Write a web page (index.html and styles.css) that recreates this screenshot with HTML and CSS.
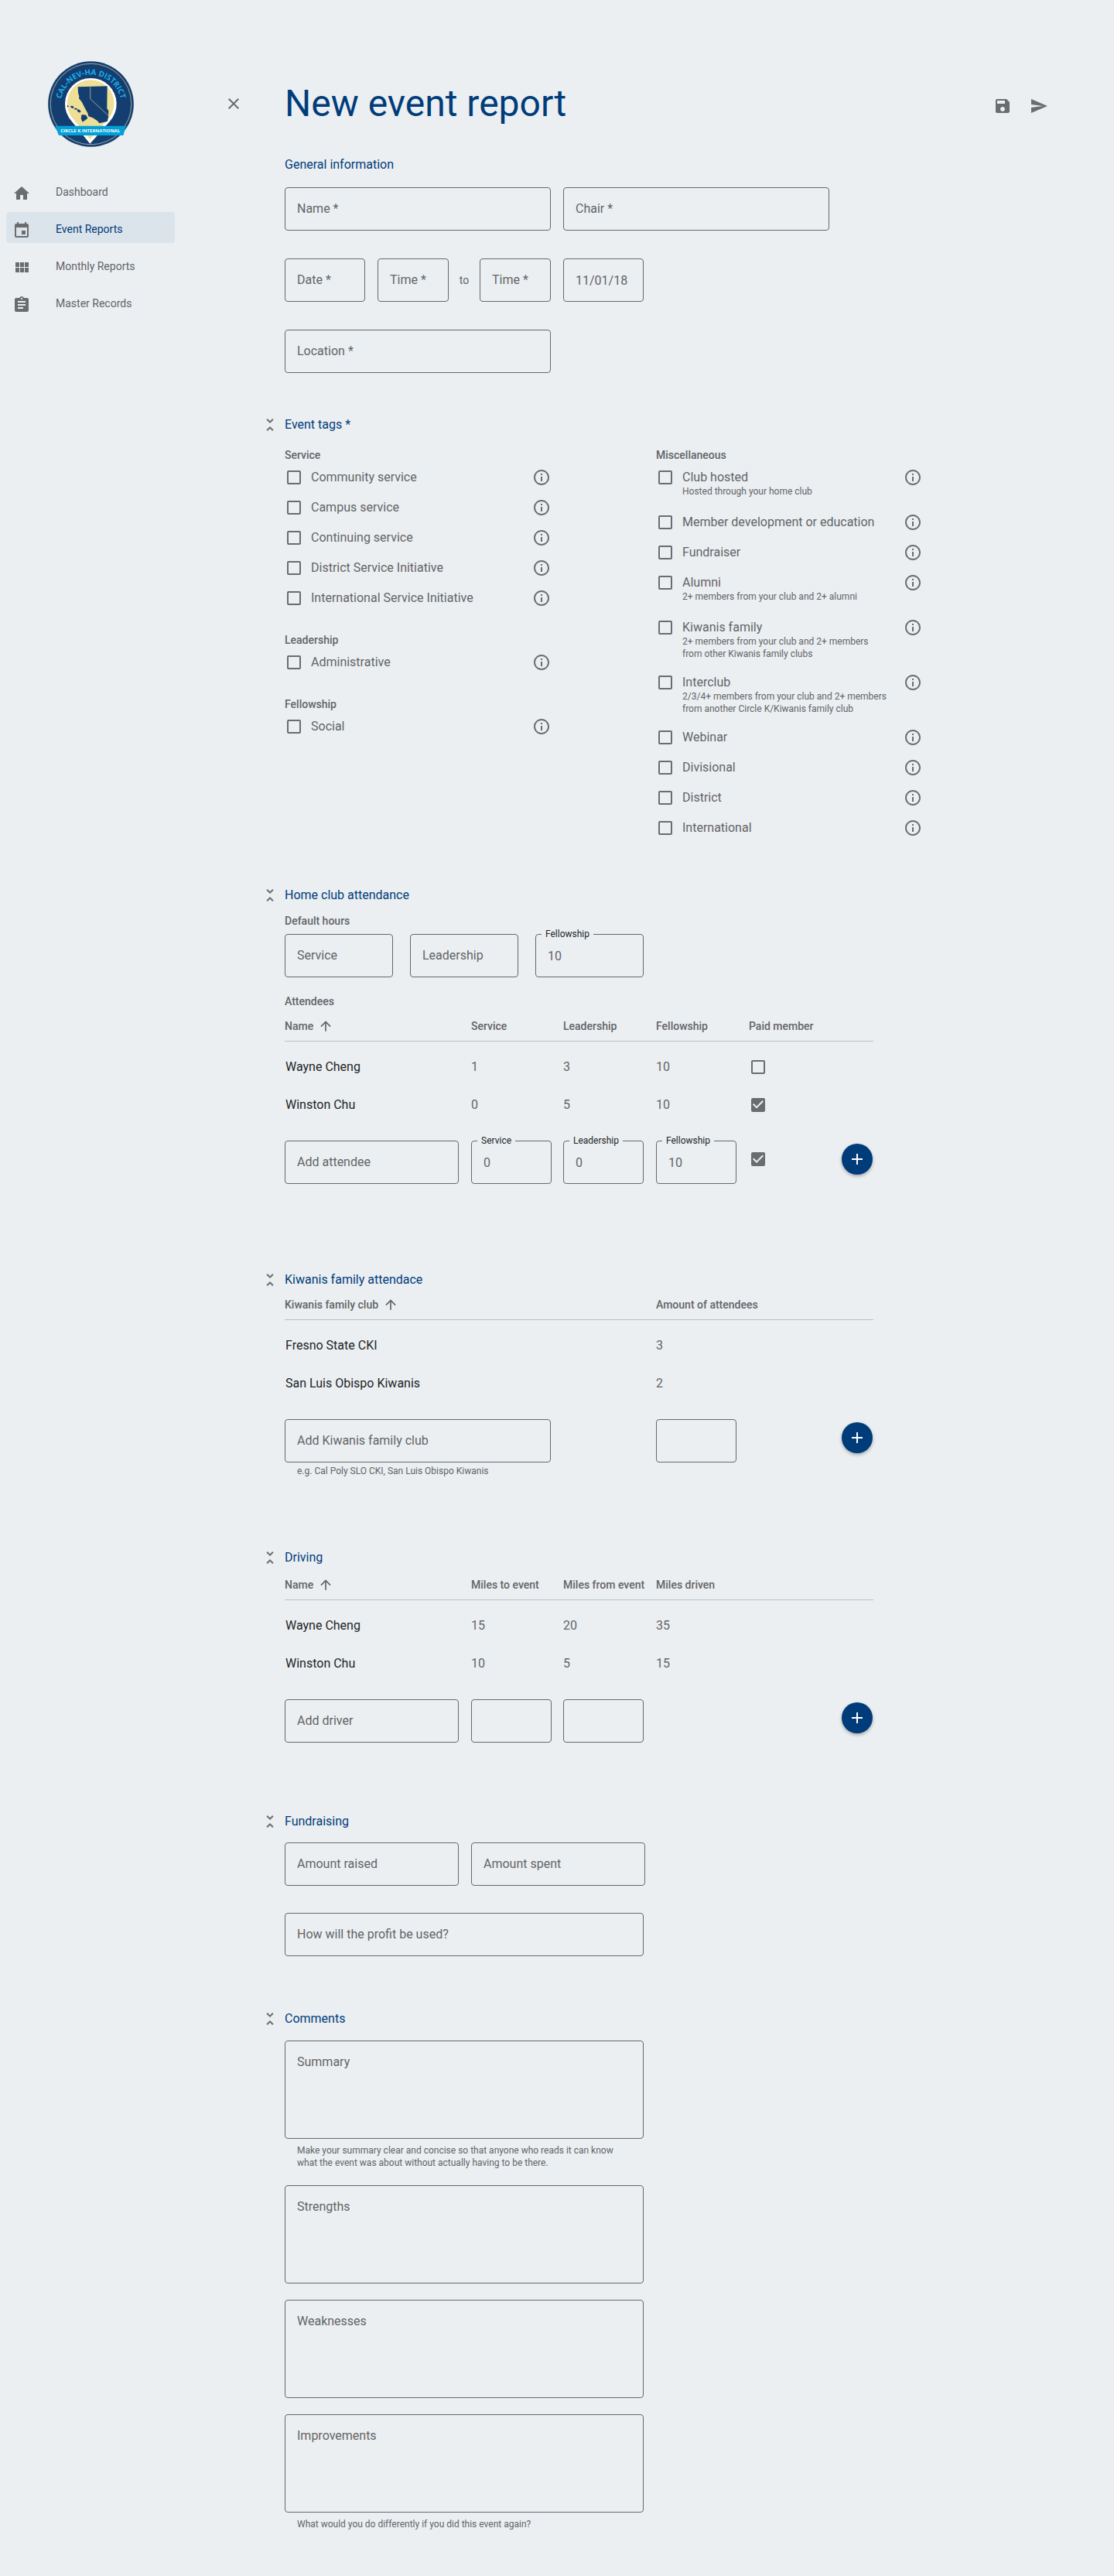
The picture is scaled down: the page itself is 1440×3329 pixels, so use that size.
FILE: index.html
```html
<!DOCTYPE html>
<html lang="en">
<head>
<meta charset="utf-8">
<meta name="viewport" content="width=device-width, initial-scale=1">
<title>New event report</title>
<link rel="stylesheet" href="styles.css">
</head>
<body>
<svg class="sprite" aria-hidden="true">
  <symbol id="i-home" viewBox="0 0 24 24"><path d="M10 20v-6h4v6h5v-8h3L12 3 2 12h3v8z"/></symbol>
  <symbol id="i-event" viewBox="0 0 24 24"><path d="M17 12h-5v5h5v-5zM16 1v2H8V1H6v2H5c-1.11 0-1.99.9-1.99 2L3 19c0 1.1.89 2 2 2h14c1.1 0 2-.9 2-2V5c0-1.1-.9-2-2-2h-1V1h-2zm3 18H5V8h14v11z"/></symbol>
  <symbol id="i-module" viewBox="0 0 24 24"><path d="M4 11h5V5H4v6zm0 7h5v-6H4v6zm6 0h5v-6h-5v6zm6 0h5v-6h-5v6zm-6-7h5V5h-5v6zm6-6v6h5V5h-5z"/></symbol>
  <symbol id="i-assignment" viewBox="0 0 24 24"><path d="M19 3h-4.18C14.4 1.84 13.3 1 12 1c-1.3 0-2.4.84-2.82 2H5c-1.1 0-2 .9-2 2v14c0 1.1.9 2 2 2h14c1.1 0 2-.9 2-2V5c0-1.1-.9-2-2-2zm-7 0c.55 0 1 .45 1 1s-.45 1-1 1-1-.45-1-1 .45-1 1-1zm2 14H7v-2h7v2zm3-4H7v-2h10v2zm0-4H7V7h10v2z"/></symbol>
  <symbol id="i-close" viewBox="0 0 24 24"><path d="M19 6.41L17.59 5 12 10.59 6.41 5 5 6.41 10.59 12 5 17.59 6.41 19 12 13.41 17.59 19 19 17.59 13.41 12z"/></symbol>
  <symbol id="i-save" viewBox="0 0 24 24"><path d="M17 3H5c-1.11 0-2 .9-2 2v14c0 1.1.89 2 2 2h14c1.1 0 2-.9 2-2V7l-4-4zm-5 16c-1.66 0-3-1.34-3-3s1.34-3 3-3 3 1.34 3 3-1.34 3-3 3zm3-10H5V5h10v4z"/></symbol>
  <symbol id="i-send" viewBox="0 0 24 24"><path d="M2.01 21L23 12 2.01 3 2 10l15 2-15 2z"/></symbol>
  <symbol id="i-fold" viewBox="0 0 24 24"><path d="M7.41 18.59L8.83 20 12 16.83 15.17 20l1.41-1.41L12 14l-4.59 4.59zm9.18-13.18L15.17 4 12 7.17 8.83 4 7.41 5.41 12 10l4.59-4.59z"/></symbol>
  <symbol id="i-info" viewBox="0 0 24 24"><path d="M11 17h2v-6h-2v6zm1-15C6.48 2 2 6.48 2 12s4.48 10 10 10 10-4.48 10-10S17.52 2 12 2zm0 18c-4.41 0-8-3.59-8-8s3.59-8 8-8 8 3.59 8 8-3.59 8-8 8zM11 9h2V7h-2v2z"/></symbol>
  <symbol id="i-add" viewBox="0 0 24 24"><path d="M19 13h-6v6h-2v-6H5v-2h6V5h2v6h6v2z"/></symbol>
  <symbol id="i-up" viewBox="0 0 24 24"><path d="M4 12l1.41 1.41L11 7.83V20h2V7.83l5.58 5.59L20 12l-8-8-8 8z"/></symbol>
</svg>

<div class="app">
  <nav class="sidebar" aria-label="Main">
    <svg class="logo" viewBox="0 0 333 333" role="img" aria-label="Cal-Nev-Ha District, Circle K International">
      <defs><path id="arc" d="M49 182A118 118 0 1 1 284 182"/></defs>
      <circle cx="166.500" cy="166.500" r="166" fill="#153e70"/>
      <circle cx="166.500" cy="166.500" r="157" fill="none" stroke="#b9c3a4" stroke-width="2.500"/>
      <path d="M163 320L92 233A100 100 0 1 1 240 233Z" fill="#fff"/>
      <path d="M163 303L100 227A91 91 0 1 1 231 227Z" fill="#eedf97"/>
      <path d="M116 100L230 97 229 184 235 192 234 218 230 234 199 241 192 232 174 220 157 214 154 202 144 184 138 172 132 160 120 144 121 136 117 124Z" fill="#153e70"/>
      <path d="M164 100V146L234 211" fill="none" stroke="#b9b98c" stroke-width="2.500"/>
      <g fill="#153e70"><circle cx="77" cy="175" r="3"/><ellipse cx="94" cy="178" rx="7" ry="4" transform="rotate(25 94 178)"/><ellipse cx="108" cy="185" rx="6" ry="3"/><ellipse cx="120" cy="193" rx="8" ry="5" transform="rotate(35 120 193)"/><path d="M131 207L148 209 154 222 134 236 128 222Z"/></g>
      <path d="M28 251H303L292 288H42Z" fill="#03a0d7"/>
      <text class="logo-band" x="164" y="276" text-anchor="middle">CIRCLE K INTERNATIONAL</text>
      <text class="logo-arc"><textPath href="#arc" startOffset="50%" text-anchor="middle">CAL-NEV-HA DISTRICT</textPath></text>
    </svg>
    <ul class="nav-list">
      <li><a class="nav-item" href="#"><svg class="icon"><use href="#i-home"/></svg><span>Dashboard</span></a></li>
      <li><a class="nav-item nav-item--active" href="#" aria-current="page"><svg class="icon"><use href="#i-event"/></svg><span>Event Reports</span></a></li>
      <li><a class="nav-item" href="#"><svg class="icon"><use href="#i-module"/></svg><span>Monthly Reports</span></a></li>
      <li><a class="nav-item" href="#"><svg class="icon"><use href="#i-assignment"/></svg><span>Master Records</span></a></li>
    </ul>
  </nav>

  <main class="main">
    <header class="page-head">
      <button class="icon-btn" type="button" aria-label="Close"><svg class="icon"><use href="#i-close"/></svg></button>
      <h1>New event report</h1>
      <div class="page-actions">
        <button class="icon-btn" type="button" aria-label="Save"><svg class="icon"><use href="#i-save"/></svg></button>
        <button class="icon-btn" type="button" aria-label="Send"><svg class="icon"><use href="#i-send"/></svg></button>
      </div>
    </header>

    <form>
      <section class="section general">
        <h2>General information</h2>
        <div class="body rows">
          <div class="row">
            <div class="field w-half"><input id="name" type="text"><label for="name">Name *</label></div>
            <div class="field w-half"><input id="chair" type="text"><label for="chair">Chair *</label></div>
          </div>
          <div class="row">
            <div class="field w-small"><input id="date" type="text"><label for="date">Date *</label></div>
            <div class="times">
              <div class="field w-time"><input id="from" type="text"><label for="from">Time *</label></div>
              <span class="to">to</span>
              <div class="field w-time"><input id="until" type="text"><label for="until">Time *</label></div>
            </div>
            <div class="field w-small"><input type="text" value="11/01/18" aria-label="End date"></div>
          </div>
          <div class="row">
            <div class="field w-half"><input id="location" type="text"><label for="location">Location *</label></div>
          </div>
        </div>
      </section>

      <section class="section tags">
        <button class="icon-btn" type="button" aria-label="Collapse Event tags"><svg class="icon"><use href="#i-fold"/></svg></button>
        <h2>Event tags *</h2>
        <div class="body tag-columns">
          <div class="tag-column">
            <fieldset class="group">
              <legend>Service</legend>
              <div class="choice"><input type="checkbox" id="t1"><label for="t1">Community service</label><button class="icon-btn" type="button" aria-label="About Community service"><svg class="icon"><use href="#i-info"/></svg></button></div>
              <div class="choice"><input type="checkbox" id="t2"><label for="t2">Campus service</label><button class="icon-btn" type="button" aria-label="About Campus service"><svg class="icon"><use href="#i-info"/></svg></button></div>
              <div class="choice"><input type="checkbox" id="t3"><label for="t3">Continuing service</label><button class="icon-btn" type="button" aria-label="About Continuing service"><svg class="icon"><use href="#i-info"/></svg></button></div>
              <div class="choice"><input type="checkbox" id="t4"><label for="t4">District Service Initiative</label><button class="icon-btn" type="button" aria-label="About District Service Initiative"><svg class="icon"><use href="#i-info"/></svg></button></div>
              <div class="choice"><input type="checkbox" id="t5"><label for="t5">International Service Initiative</label><button class="icon-btn" type="button" aria-label="About International Service Initiative"><svg class="icon"><use href="#i-info"/></svg></button></div>
            </fieldset>
            <fieldset class="group">
              <legend>Leadership</legend>
              <div class="choice"><input type="checkbox" id="t6"><label for="t6">Administrative</label><button class="icon-btn" type="button" aria-label="About Administrative"><svg class="icon"><use href="#i-info"/></svg></button></div>
            </fieldset>
            <fieldset class="group">
              <legend>Fellowship</legend>
              <div class="choice"><input type="checkbox" id="t7"><label for="t7">Social</label><button class="icon-btn" type="button" aria-label="About Social"><svg class="icon"><use href="#i-info"/></svg></button></div>
            </fieldset>
          </div>
          <div class="tag-column">
            <fieldset class="group">
              <legend>Miscellaneous</legend>
              <div class="choice choice--hint"><input type="checkbox" id="m1"><label for="m1">Club hosted<small>Hosted through your home club</small></label><button class="icon-btn" type="button" aria-label="About Club hosted"><svg class="icon"><use href="#i-info"/></svg></button></div>
              <div class="choice"><input type="checkbox" id="m2"><label for="m2">Member development or education</label><button class="icon-btn" type="button" aria-label="About Member development or education"><svg class="icon"><use href="#i-info"/></svg></button></div>
              <div class="choice"><input type="checkbox" id="m3"><label for="m3">Fundraiser</label><button class="icon-btn" type="button" aria-label="About Fundraiser"><svg class="icon"><use href="#i-info"/></svg></button></div>
              <div class="choice choice--hint"><input type="checkbox" id="m4"><label for="m4">Alumni<small>2+ members from your club and 2+ alumni</small></label><button class="icon-btn" type="button" aria-label="About Alumni"><svg class="icon"><use href="#i-info"/></svg></button></div>
              <div class="choice choice--long"><input type="checkbox" id="m5"><label for="m5">Kiwanis family<small>2+ members from your club and 2+ members<br>from other Kiwanis family clubs</small></label><button class="icon-btn" type="button" aria-label="About Kiwanis family"><svg class="icon"><use href="#i-info"/></svg></button></div>
              <div class="choice choice--long"><input type="checkbox" id="m6"><label for="m6">Interclub<small>2/3/4+ members from your club and 2+ members<br>from another Circle K/Kiwanis family club</small></label><button class="icon-btn" type="button" aria-label="About Interclub"><svg class="icon"><use href="#i-info"/></svg></button></div>
              <div class="choice"><input type="checkbox" id="m7"><label for="m7">Webinar</label><button class="icon-btn" type="button" aria-label="About Webinar"><svg class="icon"><use href="#i-info"/></svg></button></div>
              <div class="choice"><input type="checkbox" id="m8"><label for="m8">Divisional</label><button class="icon-btn" type="button" aria-label="About Divisional"><svg class="icon"><use href="#i-info"/></svg></button></div>
              <div class="choice"><input type="checkbox" id="m9"><label for="m9">District</label><button class="icon-btn" type="button" aria-label="About District"><svg class="icon"><use href="#i-info"/></svg></button></div>
              <div class="choice"><input type="checkbox" id="m10"><label for="m10">International</label><button class="icon-btn" type="button" aria-label="About International"><svg class="icon"><use href="#i-info"/></svg></button></div>
            </fieldset>
          </div>
        </div>
      </section>

      <section class="section home-club">
        <button class="icon-btn" type="button" aria-label="Collapse Home club attendance"><svg class="icon"><use href="#i-fold"/></svg></button>
        <h2>Home club attendance</h2>
        <div class="body">
          <h3>Default hours</h3>
          <div class="row row--hours">
            <div class="field w-hours"><input id="dh-s" type="text"><label for="dh-s">Service</label></div>
            <div class="field w-hours"><input id="dh-l" type="text"><label for="dh-l">Leadership</label></div>
            <div class="field field--filled w-hours"><input id="dh-f" type="text" value="10"><label for="dh-f">Fellowship</label></div>
          </div>
          <h3>Attendees</h3>
          <table>
            <colgroup><col class="c-name"><col class="c-num"><col class="c-wide"><col class="c-wide"><col></colgroup>
            <thead>
              <tr><th scope="col" aria-sort="ascending"><button class="sort" type="button">Name<svg class="icon"><use href="#i-up"/></svg></button></th><th scope="col">Service</th><th scope="col">Leadership</th><th scope="col">Fellowship</th><th scope="col">Paid member</th></tr>
            </thead>
            <tbody>
              <tr><td>Wayne Cheng</td><td>1</td><td>3</td><td>10</td><td><div class="check-cell"><input type="checkbox" aria-label="Wayne Cheng is a paid member"></div></td></tr>
              <tr><td>Winston Chu</td><td>0</td><td>5</td><td>10</td><td><div class="check-cell"><input type="checkbox" checked aria-label="Winston Chu is a paid member"></div></td></tr>
            </tbody>
            <tfoot>
              <tr>
                <td><div class="field w-person"><input id="add-att" type="text"><label for="add-att">Add attendee</label></div></td>
                <td><div class="field field--filled w-small"><input id="a-s" type="text" value="0"><label for="a-s">Service</label></div></td>
                <td><div class="field field--filled w-small"><input id="a-l" type="text" value="0"><label for="a-l">Leadership</label></div></td>
                <td><div class="field field--filled w-small"><input id="a-f" type="text" value="10"><label for="a-f">Fellowship</label></div></td>
                <td><div class="add-cell"><div class="check-cell"><input type="checkbox" checked aria-label="Paid member"></div><button class="fab" type="button" aria-label="Add attendee"><svg class="icon"><use href="#i-add"/></svg></button></div></td>
              </tr>
            </tfoot>
          </table>
        </div>
      </section>

      <section class="section kiwanis">
        <button class="icon-btn" type="button" aria-label="Collapse Kiwanis family attendace"><svg class="icon"><use href="#i-fold"/></svg></button>
        <h2>Kiwanis family attendace</h2>
        <div class="body">
          <table>
            <colgroup><col class="c-club"><col></colgroup>
            <thead>
              <tr><th scope="col" aria-sort="ascending"><button class="sort" type="button">Kiwanis family club<svg class="icon"><use href="#i-up"/></svg></button></th><th scope="col">Amount of attendees</th></tr>
            </thead>
            <tbody>
              <tr><td>Fresno State CKI</td><td>3</td></tr>
              <tr><td>San Luis Obispo Kiwanis</td><td>2</td></tr>
            </tbody>
            <tfoot>
              <tr>
                <td><div class="field w-half"><input id="add-club" type="text" aria-describedby="club-hint"><label for="add-club">Add Kiwanis family club</label></div><p class="hint hint--tight" id="club-hint">e.g. Cal Poly SLO CKI, San Luis Obispo Kiwanis</p></td>
                <td><div class="add-cell"><div class="field w-small"><input type="text" aria-label="Amount of attendees"></div><button class="fab" type="button" aria-label="Add Kiwanis family club"><svg class="icon"><use href="#i-add"/></svg></button></div></td>
              </tr>
            </tfoot>
          </table>
        </div>
      </section>

      <section class="section driving">
        <button class="icon-btn" type="button" aria-label="Collapse Driving"><svg class="icon"><use href="#i-fold"/></svg></button>
        <h2>Driving</h2>
        <div class="body">
          <table>
            <colgroup><col class="c-name"><col class="c-num"><col class="c-wide"><col></colgroup>
            <thead>
              <tr><th scope="col" aria-sort="ascending"><button class="sort" type="button">Name<svg class="icon"><use href="#i-up"/></svg></button></th><th scope="col">Miles to event</th><th scope="col">Miles from event</th><th scope="col">Miles driven</th></tr>
            </thead>
            <tbody>
              <tr><td>Wayne Cheng</td><td>15</td><td>20</td><td>35</td></tr>
              <tr><td>Winston Chu</td><td>10</td><td>5</td><td>15</td></tr>
            </tbody>
            <tfoot>
              <tr>
                <td><div class="field w-person"><input id="add-driver" type="text"><label for="add-driver">Add driver</label></div></td>
                <td><div class="field w-small"><input type="text" aria-label="Miles to event"></div></td>
                <td><div class="field w-small"><input type="text" aria-label="Miles from event"></div></td>
                <td><div class="add-cell"><button class="fab" type="button" aria-label="Add driver"><svg class="icon"><use href="#i-add"/></svg></button></div></td>
              </tr>
            </tfoot>
          </table>
        </div>
      </section>

      <section class="section fundraising">
        <button class="icon-btn" type="button" aria-label="Collapse Fundraising"><svg class="icon"><use href="#i-fold"/></svg></button>
        <h2>Fundraising</h2>
        <div class="body rows rows--close">
          <div class="row">
            <div class="field w-person"><input id="raised" type="text"><label for="raised">Amount raised</label></div>
            <div class="field w-person"><input id="spent" type="text"><label for="spent">Amount spent</label></div>
          </div>
          <div class="field w-long"><input id="profit" type="text"><label for="profit">How will the profit be used?</label></div>
        </div>
      </section>

      <section class="section comments">
        <button class="icon-btn" type="button" aria-label="Collapse Comments"><svg class="icon"><use href="#i-fold"/></svg></button>
        <h2>Comments</h2>
        <div class="body notes">
          <div>
            <div class="field field--area w-long"><textarea id="summary" aria-describedby="summary-hint"></textarea><label for="summary">Summary</label></div>
            <p class="hint" id="summary-hint">Make your summary clear and concise so that anyone who reads it can know<br>what the event was about without actually having to be there.</p>
          </div>
          <div class="field field--area w-long"><textarea id="strengths"></textarea><label for="strengths">Strengths</label></div>
          <div class="field field--area w-long"><textarea id="weaknesses"></textarea><label for="weaknesses">Weaknesses</label></div>
          <div>
            <div class="field field--area w-long"><textarea id="improvements" aria-describedby="improve-hint"></textarea><label for="improvements">Improvements</label></div>
            <p class="hint" id="improve-hint">What would you do differently if you did this event again?</p>
          </div>
        </div>
      </section>
    </form>
  </main>
</div>
</body>
</html>
```
FILE: styles.css
```css
:root {
  --surface: #ebeff2;
  --primary: #003c7a;
  --text: #636466;
  --strong: #222425;
  --icon: #6b6c6d;
  --outline: #66696c;
  --divider: #bcc0c3;
}

* { box-sizing: border-box; }

body {
  margin: 0;
  background: var(--surface);
  color: var(--text);
  font: 400 16px/24px Roboto, sans-serif;
}

h1, h2, h3, p, ul { margin: 0; padding: 0; }
ul { list-style: none; }
button, input, textarea { font: inherit; color: inherit; margin: 0; }

.sprite { display: none; }
.icon { display: block; width: 24px; height: 24px; fill: currentColor; }
.icon-btn {
  width: 24px;
  height: 24px;
  padding: 0;
  border: 0;
  background: none;
  color: var(--icon);
  cursor: pointer;
}

.app { display: flex; }

/* Sidebar */
.sidebar { flex: 0 0 234px; padding: 79px 8px 0; }
.logo { display: block; width: 111px; height: 111px; margin: 0 auto 36px; }
.logo-arc, .logo-band { font-family: "Open Sans", sans-serif; font-weight: 700; }
.logo-arc { font-size: 30px; fill: #14b0ee; }
.logo-band { font-size: 18px; fill: #fff; }
.nav-list { display: grid; gap: 8px; }
.nav-item {
  display: flex;
  align-items: center;
  gap: 32px;
  height: 40px;
  padding: 8px 8px 0;
  border-radius: 4px;
  color: var(--text);
  font-size: 14px;
  line-height: 20px;
  text-decoration: none;
}
.nav-item .icon { color: var(--icon); }
.nav-item span { padding-bottom: 4px; }
.nav-item--active { background: #dce4eb; color: var(--primary); }

/* Page header */
.main { flex: 1; min-width: 0; padding: 106px 85px 58px 56px; }
.page-head { display: grid; grid-template-columns: 78px 1fr auto; align-items: center; }
.page-head h1 { color: var(--primary); font-size: 48px; font-weight: 400; line-height: 56px; }
.page-actions { display: flex; gap: 23px; padding-top: 6px; }

/* Sections */
.section { display: grid; grid-template-columns: 24px 1fr; column-gap: 7px; padding-left: 47px; }
.section h2 { grid-column: 2; color: var(--primary); font-size: 16px; font-weight: 400; line-height: 24px; }
.body { grid-column: 2; min-width: 0; }
h3, legend { padding: 0; font-size: 14px; font-weight: 500; line-height: 20px; }

.general { margin-top: 39px; row-gap: 17px; }
.tags { margin-top: 55px; row-gap: 17px; }
.home-club { margin-top: 48px; row-gap: 11px; }
.kiwanis { margin-top: 112px; row-gap: 10px; }
.driving { margin-top: 92px; row-gap: 13px; }
.fundraising { margin-top: 90px; row-gap: 15px; }
.comments { margin-top: 69px; row-gap: 16px; }

.rows { display: grid; gap: 36px; }
.rows--close { gap: 35px; }
.row { display: flex; flex-wrap: wrap; gap: 16px; }
.row--hours { gap: 22px; margin: 7px 0 21px; }
.times { display: flex; align-items: center; width: 224px; }
.to { flex: 1; text-align: center; font-size: 14px; }

/* Outlined fields */
.field { display: grid; max-width: 100%; }
.field input, .field textarea, .field label { grid-area: 1 / 1; }
.field input, .field textarea {
  width: 100%;
  min-width: 0;
  height: 56px;
  padding: 0 15px;
  border: 1px solid var(--outline);
  border-radius: 4px;
  background: none;
}
.field textarea { height: 127px; padding-top: 15px; resize: none; }
.field label { align-self: center; padding: 0 16px; pointer-events: none; }
.field--area label { align-self: start; padding-top: 16px; }
.field--filled label {
  align-self: start;
  justify-self: start;
  margin: -8px 0 0 8px;
  padding: 0 5px;
  background: var(--surface);
  color: var(--strong);
  font-size: 12px;
  line-height: 16px;
}
.w-small { width: 104px; }
.w-time { width: 92px; }
.w-hours { width: 140px; }
.w-person { width: 225px; }
.w-half { width: 344px; }
.w-long { width: 464px; }

.hint { padding: 7px 16px 0; font-size: 12px; line-height: 16px; }
.hint--tight { padding-top: 3px; }
.notes { display: grid; gap: 21px; }

/* Checkboxes */
input[type="checkbox"] {
  appearance: none;
  flex: none;
  width: 18px;
  height: 18px;
  border: 2px solid var(--icon);
  border-radius: 2px;
}
input[type="checkbox"]:checked { background: var(--icon); }
input[type="checkbox"]:checked::before {
  content: "";
  display: block;
  width: 14px;
  height: 14px;
  background: var(--surface);
  clip-path: path("M5 12L0 7 1.410 5.590 5 9.170 12.590 1.580 14 3z");
}

/* Event tags */
.tag-columns { display: flex; flex-wrap: wrap; column-gap: 136px; }
.tag-column { display: flex; flex-direction: column; gap: 17px; width: 344px; }
.group { margin: 0; padding: 0; border: 0; min-width: 0; }
.group legend { margin-bottom: 7px; }
.choice { display: flex; align-items: flex-start; min-height: 39px; padding-left: 3px; }
.choice--hint { min-height: 58px; }
.choice--long { min-height: 71px; }
.choice input { margin-top: 3px; }
.choice label { flex: 1; padding-left: 13px; white-space: nowrap; }
.choice small { display: block; margin-top: -2px; font-size: 12px; line-height: 16px; }

/* Tables */
table { width: 100%; max-width: 761px; table-layout: fixed; border-collapse: separate; border-spacing: 0; }
.c-name { width: 241px; }
.c-num { width: 119px; }
.c-wide { width: 120px; }
.c-club { width: 480px; }
h3 + table { margin-top: 12px; }
th {
  padding: 0 0 9px;
  border-bottom: 1px solid var(--divider);
  font-size: 14px;
  font-weight: 500;
  line-height: 20px;
  text-align: left;
  white-space: nowrap;
}
.sort { display: flex; align-items: center; gap: 6px; padding: 0; border: 0; background: none; cursor: pointer; }
.sort .icon { width: 20px; height: 20px; }
td { padding: 0; }
tbody td { height: 49px; }
tbody td:first-child { padding-left: 1px; color: var(--strong); }
tbody tr:first-child td { height: 57px; padding-top: 8px; }
tfoot td { padding-top: 22px; vertical-align: top; }
.check-cell { display: flex; align-items: center; padding-left: 3px; }
.add-cell { display: flex; justify-content: space-between; }
.add-cell .check-cell { height: 48px; }

.fab {
  display: grid;
  place-items: center;
  width: 40px;
  height: 40px;
  margin: 4px 1px 0 auto;
  padding: 0;
  border: 0;
  border-radius: 50%;
  background: var(--primary);
  color: #fff;
  box-shadow: 0 2px 4px rgba(0, 0, 0, 0.3);
  cursor: pointer;
}
```
